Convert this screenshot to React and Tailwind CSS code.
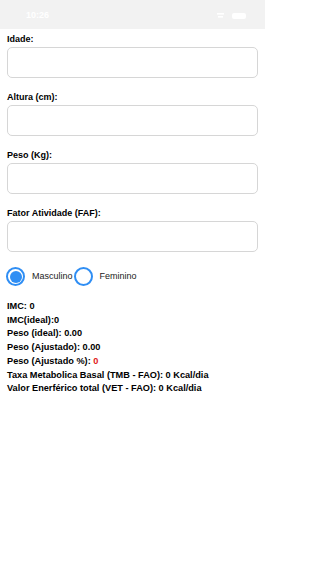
import React from "react";

const font = { fontFamily: '"Liberation Sans", Arial, sans-serif' };

function Field({ label }) {
  return (
    <div className="flex flex-col">
      <div className="h-[12px] flex items-center text-[9px] font-bold text-black leading-none">{label}</div>
      <div className="mt-[2px] h-[31px] rounded-[5px] border border-[#d6d6d6] bg-white" />
    </div>
  );
}

function Radio({ checked, label }) {
  return (
    <div className="flex items-center">
      <div className="w-[19px] h-[19px] rounded-full border-[2px] border-[#2f8ef4] flex items-center justify-center">
        {checked && <div className="w-[12px] h-[12px] rounded-full bg-[#2f8ef4]" />}
      </div>
      <span className="ml-[7px] text-[9px] text-[#222]">{label}</span>
    </div>
  );
}

export default function App() {
  return (
    <div className="w-[265px] h-[573px] bg-white" style={font}>
      <div className="h-[29px] bg-[#f2f2f2] flex items-center justify-between pl-[26px] pr-[19px]">
        <span className="text-[9px] font-semibold text-white mt-[2px]">10:26</span>
        <div className="flex items-center gap-[8px] mt-[2px]">
          <svg width="7" height="5" viewBox="0 0 7 5">
            <rect x="0" y="0" width="7" height="1.6" fill="#fff" />
            <rect x="1" y="3" width="5" height="1.6" fill="#fff" />
          </svg>
          <div className="w-[14px] h-[6px] rounded-[2px] bg-white" />
        </div>
      </div>
      <div className="px-[7px] pt-[4px] flex flex-col gap-[13px]">
        <Field label="Idade:" />
        <Field label="Altura (cm):" />
        <Field label="Peso (Kg):" />
        <Field label="Fator Atividade (FAF):" />
      </div>
      <div className="px-[6px] mt-[15px] flex items-center">
        <Radio checked label="Masculino" />
        <div className="ml-[1px]">
          <Radio label="Feminino" />
        </div>
      </div>
      <div className="px-[7px] mt-[14px] flex flex-col text-[9.2px] font-bold text-black leading-[13.7px]">
        <div>IMC: 0</div>
        <div>IMC(ideal):0</div>
        <div>Peso (ideal): 0.00</div>
        <div>Peso (Ajustado): 0.00</div>
        <div>Peso (Ajustado %): <span className="text-[#e02020]">0</span></div>
        <div>Taxa Metabolica Basal (TMB - FAO): 0 Kcal/dia</div>
        <div>Valor Enerférico total (VET - FAO): 0 Kcal/dia</div>
      </div>
    </div>
  );
}
